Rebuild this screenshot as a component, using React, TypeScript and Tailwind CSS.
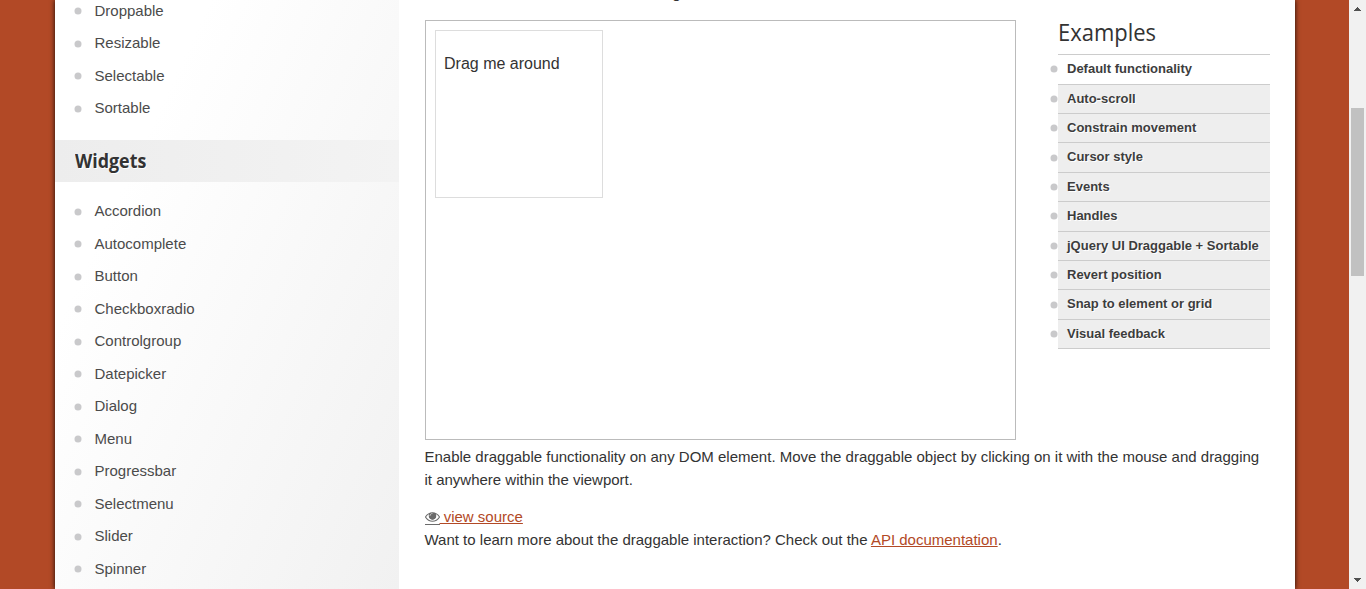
const interactions = ["Droppable", "Resizable", "Selectable", "Sortable"];
const widgets = [
  "Accordion", "Autocomplete", "Button", "Checkboxradio", "Controlgroup", "Datepicker",
  "Dialog", "Menu", "Progressbar", "Selectmenu", "Slider", "Spinner",
];
const examples = [
  "Default functionality", "Auto-scroll", "Constrain movement", "Cursor style", "Events",
  "Handles", "jQuery UI Draggable + Sortable", "Revert position", "Snap to element or grid", "Visual feedback",
];

function Bullet() {
  return (
    <svg width="8" height="8" viewBox="0 0 8 8" className="block shrink-0 fill-[#c9c9cb]">
      <circle cx="4" cy="4" r="3.5" />
    </svg>
  );
}

function NavList({ items }: { items: string[] }) {
  return (
    <ul className="pl-[19px]">
      {items.map((item) => (
        <li key={item} className="flex h-[32.5px] items-center gap-[12.5px] text-[15px] leading-[22.5px] text-[#4b4b4b]">
          <span className="pt-px"><Bullet /></span>
          <a>{item}</a>
        </li>
      ))}
    </ul>
  );
}

function EyeIcon() {
  return (
    <span className="inline-block h-[15px] w-[15px] border-b border-[#6b6b6b] align-[-3px]">
      <svg viewBox="0 0 1792 1792" className="-mt-px block size-[15px] fill-[#6b6b6b]">
        <path d="M1664 960q-152-236-381-353 61 104 61 225 0 185-131.5 316.5t-316.5 131.5-316.5-131.5-131.5-316.5q0-121 61-225-229 117-381 353 133 205 333.5 326.5t434.5 121.5 434.5-121.5 333.5-326.5zm-720-384q0-20-14-34t-34-14q-125 0-214.5 89.5t-89.5 214.5q0 20 14 34t34 14 34-14 14-34q0-86 61-147t147-61q20 0 34-14t14-34zm848 384q0 34-20 69-140 230-376.5 368.5t-499.5 138.5-499.5-139-376.5-368q-20-35-20-69t20-69q140-229 376.5-368t499.5-139 499.5 139 376.5 368q20 35 20 69z" />
        <circle cx="896" cy="850" r="400" />
        <path d="M896 528q-125 0-214 89t-90 215" fill="none" stroke="#ddd" strokeWidth="90" />
      </svg>
    </span>
  );
}

function Scrollbar() {
  return (
    <div className="flex w-[17px] flex-col items-center justify-between bg-[#f1f1f1]">
      <svg width="17" height="17" viewBox="0 0 17 17" shapeRendering="crispEdges" className="fill-[#505050]">
        <path d="M8 7h1v1h1v1h1v1h1v1H5v-1h1V9h1V8h1z" />
      </svg>
      <div className="mt-[91px] h-[168px] w-[13px] bg-[#c1c1c1]" />
      <div className="grow" />
      <svg width="17" height="17" viewBox="0 0 17 17" shapeRendering="crispEdges" className="fill-[#505050]">
        <path d="M5 6h7v1h-1v1h-1v1H9v1H8V9H7V8H6V7H5z" />
      </svg>
    </div>
  );
}

export default function App() {
  return (
    <div className="flex h-[589px] w-[1366px] overflow-hidden bg-[#b24926] font-['Liberation_Sans',sans-serif] text-[15px] leading-[22.5px] text-[#333]">
      <div className="ml-[55px] flex w-[1240px] bg-white shadow-[0_0_5px_rgba(0,0,0,0.9)]">
        <aside className="w-[344px] shrink-0 bg-[linear-gradient(115deg,#fff_25%,#f1f1f1_100%)]">
          <div className="-mt-[5.4px]"><NavList items={interactions} /></div>
          <h3 className="mt-[15.4px] mb-[13.1px] flex h-[42px] items-center bg-linear-to-r from-[#ededed] to-[#f3f3f3] pl-5 font-['Open_Sans',sans-serif] text-[19px] font-bold text-[#333] [text-shadow:1px_1px_0_#fff]">
            <span className="origin-left scale-x-[0.94]">Widgets</span>
          </h3>
          <NavList items={widgets} />
        </aside>
        <main className="ml-[26px] w-[846px] shrink-0">
          <p className="-mt-[18px] h-[38px] pl-[13px] text-[16px] leading-[22px] whitespace-nowrap">Allow elements to be moved using the mouse.</p>
          <div className="flex">
            <div className="h-[420px] w-[591px] border border-[#bbb] p-[9px]">
              <div className="h-[168px] w-[168px] border border-[#ddd] px-2 pt-[21px] text-[16px] leading-6">Drag me around</div>
            </div>
            <nav className="ml-[42px] w-[212px]">
              <h2 className="flex h-[34px] items-start font-['Open_Sans',sans-serif] text-[23px] leading-[24px] font-normal">
                <span className="origin-left scale-x-[0.955]">Examples</span>
              </h2>
              <ul>
                {examples.map((label) => (
                  <li key={label} className="group -ml-2 flex h-[29.42px] items-center text-[13px] font-bold text-[#3d3d3d] first:h-[30.5px]">
                    <span className="pb-px"><Bullet /></span>
                    <a className="flex h-full grow items-center border-b border-[#ccc] bg-[#eee] pt-[0.3px] pl-[9px] [text-shadow:1px_1px_0_#fff] group-first:border-t group-first:bg-white">{label}</a>
                  </li>
                ))}
              </ul>
            </nav>
          </div>
          <div className="-ml-[0.5px] w-[845px] pt-[5px] leading-[23px]">
            <p className="pr-[8px]">
              Enable draggable functionality on any DOM element. Move the draggable object by clicking on it with the mouse and dragging it anywhere within the viewport.
            </p>
            <p className="h-[37px] pt-[14px]">
              <a className="text-[#b24926] underline"><EyeIcon /> view source</a>
            </p>
            <p>
              Want to learn more about the draggable interaction? Check out the <a className="text-[#b24926] underline">API documentation</a>.
            </p>
          </div>
        </main>
      </div>
      <div className="w-[54px] shrink-0" />
      <Scrollbar />
    </div>
  );
}
